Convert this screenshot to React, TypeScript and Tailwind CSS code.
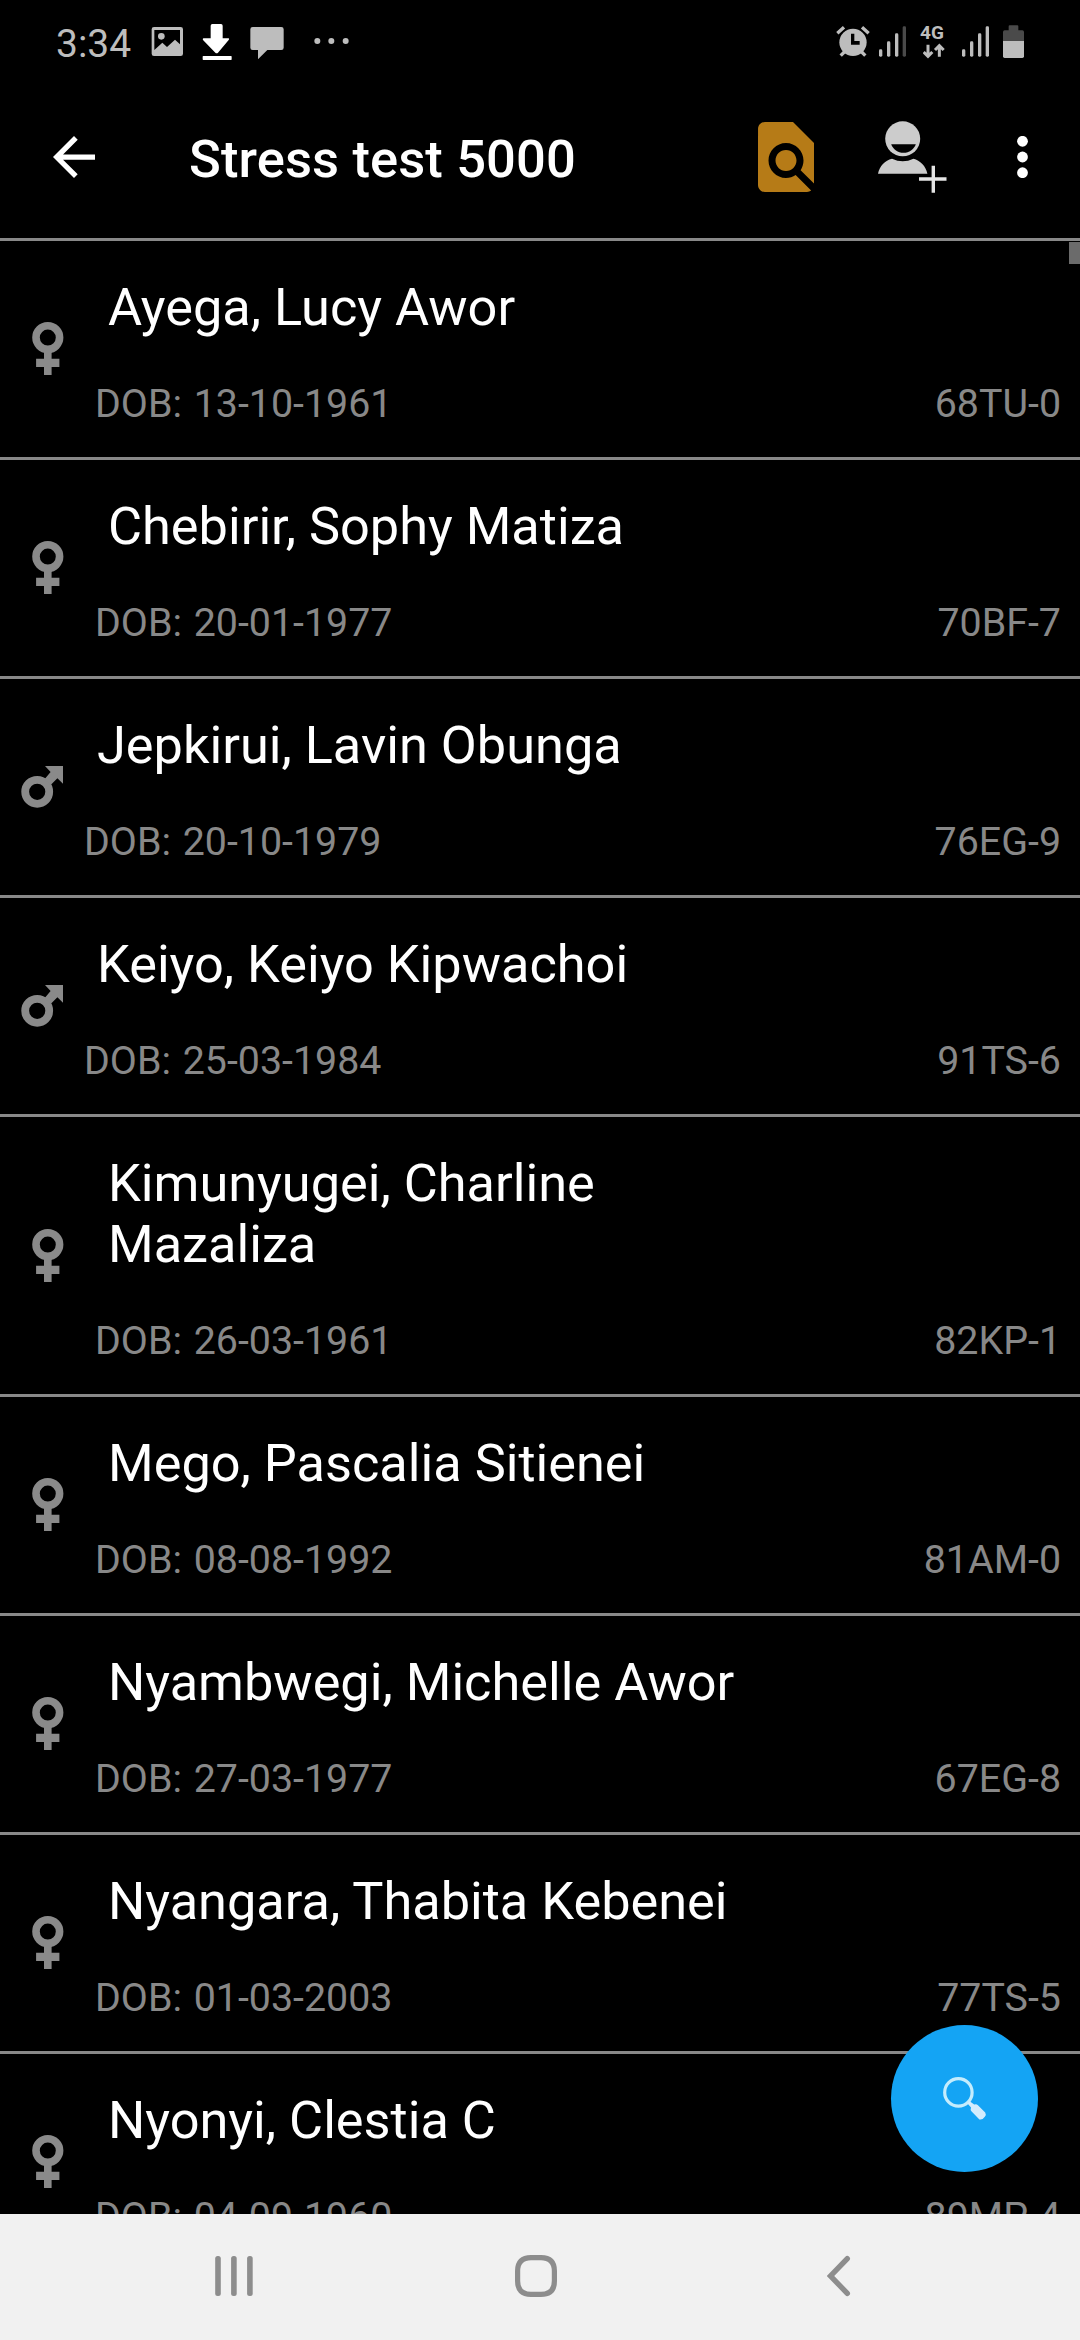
import type { ReactNode } from "react";

type Sex = "female" | "male";

interface Patient {
  name: string;
  dob: string;
  code: string;
  sex: Sex;
}

const patients: Patient[] = [
  { name: "Ayega, Lucy Awor", dob: "13-10-1961", code: "68TU-0", sex: "female" },
  { name: "Chebirir, Sophy Matiza", dob: "20-01-1977", code: "70BF-7", sex: "female" },
  { name: "Jepkirui, Lavin Obunga", dob: "20-10-1979", code: "76EG-9", sex: "male" },
  { name: "Keiyo, Keiyo Kipwachoi", dob: "25-03-1984", code: "91TS-6", sex: "male" },
  { name: "Kimunyugei, Charline Mazaliza", dob: "26-03-1961", code: "82KP-1", sex: "female" },
  { name: "Mego, Pascalia Sitienei", dob: "08-08-1992", code: "81AM-0", sex: "female" },
  { name: "Nyambwegi, Michelle Awor", dob: "27-03-1977", code: "67EG-8", sex: "female" },
  { name: "Nyangara, Thabita Kebenei", dob: "01-03-2003", code: "77TS-5", sex: "female" },
  { name: "Nyonyi, Clestia C", dob: "04-09-1960", code: "89MP-4", sex: "female" },
];

function FemaleIcon() {
  return (
    <svg className="mb-px h-[53px] w-8" viewBox="0 0 32 53" fill="#8a8a8a">
      <circle cx="15.8" cy="15.6" r="11.8" fill="none" stroke="#8a8a8a" strokeWidth="7.6" />
      <path d="M12 30h7.6v6.7h7.8V45h-7.8v8H12v-8H4.1v-8.3H12z" />
    </svg>
  );
}

function MaleIcon() {
  return (
    <svg className="h-[42px] w-[42px]" viewBox="0 0 42 42" fill="#8a8a8a">
      <circle cx="16.2" cy="25.8" r="12" fill="none" stroke="#8a8a8a" strokeWidth="7.8" />
      <path d="M24 0h18v17.8l-5.6-5.6-7 7-5.7-6.2 5.9-7z" />
    </svg>
  );
}

function Signal({ weak }: { weak?: boolean }) {
  return (
    <svg className="h-9 w-7" viewBox="0 0 84 108" fill="#bdbdbd">
      <rect x="0" y="76" width="10" height="22" rx="4" />
      <rect x="24" y="52" width="10" height="46" rx="4" />
      <rect x="48" y="28" width="10" height="70" rx="4" />
      <rect x="71" y="7" width="10" height="91" rx="4" fill={weak ? "#4a4a4a" : "#bdbdbd"} />
    </svg>
  );
}

function StatusBar() {
  return (
    <div className="flex h-[75px] items-start pt-6 text-[#bdbdbd]">
      <span className="ml-[56px] w-[95px] text-[39px] leading-[40px]">3:34</span>
      <svg className="h-9 w-8" viewBox="0 0 96 108" fill="#bdbdbd">
        <path
          fillRule="evenodd"
          d="M9 9h80a7 7 0 0 1 7 7v73a7 7 0 0 1-7 7H9a7 7 0 0 1-7-7V16a7 7 0 0 1 7-7zm1 9v60l24-22 14 13 24-22 15 14V18z"
        />
        <circle cx="31" cy="37" r="10" />
      </svg>
      <svg className="ml-[19px] h-9 w-[30px]" viewBox="0 0 90 108" fill="#fff">
        <path d="M31 0h26q5 0 5 5v38h18q3 2 0 5L48 86q-4 4-8 0L3 48q-2-3 1-5h22V5q0-5 5-5z" />
        <rect x="2" y="96" width="87" height="12" rx="2" />
      </svg>
      <svg className="ml-[18px] h-9 w-[34px]" viewBox="0 0 102 108" fill="#bdbdbd">
        <path d="M8 9h86q7 0 7 7v55q0 7-7 7H52L24 106V78H8q-7 0-7-7V16q0-7 7-7z" />
      </svg>
      <svg className="ml-[30px] h-9 w-9" viewBox="0 0 108 108" fill="#bdbdbd">
        <circle cx="10" cy="51" r="9" />
        <circle cx="52" cy="51" r="9" />
        <circle cx="95" cy="51" r="9" />
      </svg>

      <div className="ml-auto mr-14 flex items-start">
        <svg className="h-9 w-[34px]" viewBox="0 0 102 108" fill="#bdbdbd">
          <circle cx="51" cy="55" r="41" />
          <path
            d="M4 28 24 10M98 28 78 10M14 95l14-14M88 95 74 81"
            stroke="#bdbdbd"
            strokeWidth="10"
          />
          <path d="M45 29h10v22h16v11H45z" fill="#000" />
        </svg>
        <div className="ml-[9px]">
          <Signal weak />
        </div>
        <div className="ml-[13px] flex h-9 w-[26px] flex-col items-start">
          <span className="h-[17px] text-[19px] font-bold leading-[17px]">4G</span>
          <svg className="ml-[3px] mt-[2px] h-4 w-[22px]" viewBox="0 0 66 48" fill="none" stroke="#bdbdbd" strokeWidth="9">
            <path d="M15 5v36M2 27l13 13 13-13M49 41V7M36 21 49 8l13 13" />
          </svg>
        </div>
        <div className="ml-4">
          <Signal />
        </div>
        <svg className="ml-[13px] h-9 w-[21px]" viewBox="0 0 63 108">
          <path d="M17 19V7q0-3 3-3h23q3 0 3 3v12h12q5 0 5 5v27H0V24q0-5 5-5z" fill="#4a4a4a" />
          <path d="M0 51h63v46q0 5-5 5H5q-5 0-5-5z" fill="#bdbdbd" />
        </svg>
      </div>
    </div>
  );
}

function Header() {
  return (
    <header className="flex h-[166px] items-center border-b-[3px] border-[#888888]">
      <svg className="ml-[53px] h-[42px] w-[42px]" viewBox="4 4 16 16" fill="#fff">
        <path d="M20 11H7.83l5.59-5.59L12 4l-8 8 8 8 1.41-1.41L7.83 13H20v-2z" />
      </svg>
      <h1 className="ml-[94px] mt-[5px] text-[52.5px] font-medium leading-[62px] tracking-[0.12px] text-white">
        Stress test 5000
      </h1>
      <svg className="ml-auto h-[70px] w-14" viewBox="4 2 16 20" fill="#b67b17">
        <path d="M20 19.59V8l-6-6H6c-1.1 0-1.99.9-1.99 2L4 20c0 1.1.89 2 1.99 2H18c.45 0 .85-.15 1.19-.4l-4.43-4.43c-.8.52-1.74.83-2.76.83-2.76 0-5-2.24-5-5s2.24-5 5-5 5 2.24 5 5c0 1.02-.31 1.96-.83 2.75L20 19.59zM9 13c0 1.66 1.34 3 3 3s3-1.34 3-3-1.34-3-3-3-3 1.34-3 3z" />
      </svg>
      <svg className="ml-16 h-[72px] w-[69px]" viewBox="0 0 69 72" fill="#cccccc">
        <circle cx="24.7" cy="17.8" r="17.5" />
        <path d="M13.2 23.2h24.6c-2 5.3-6.6 8.6-12.3 8.6s-10.3-3.3-12.3-8.6z" fill="#000" />
        <path d="M0 52.8C1.5 45 7 39.5 14 37.7q10.7 5 21.5 0C42 39.5 48 45 49.4 52.8z" />
        <path d="M55.3 44.7v27M41 58h27.5" stroke="#e4e4e4" strokeWidth="3.4" />
      </svg>
      <svg className="ml-[70px] mr-[52px] h-[42px] w-[11px]" viewBox="0 0 11 42" fill="#fff">
        <circle cx="5.5" cy="5.3" r="5.4" />
        <circle cx="5.5" cy="21" r="5.4" />
        <circle cx="5.5" cy="36.7" r="5.4" />
      </svg>
    </header>
  );
}

function PatientRow({ name, dob, code, sex }: Patient) {
  return (
    <li className="flex shrink-0 border-b-[3px] border-[#888888]">
      <div
        className={`flex shrink-0 items-center justify-center ${
          sex === "female" ? "w-[95px]" : "w-[84px]"
        }`}
      >
        {sex === "female" ? <FemaleIcon /> : <MaleIcon />}
      </div>
      <div className="flex-1 pb-[30px] pr-[19px] pt-[36px]">
        <p className="max-w-[660px] pl-[13px] text-[52.3px] leading-[61px] text-white">{name}</p>
        <div className="mt-[43px] flex justify-between text-[39.375px] leading-[46px] text-[#888888]">
          <span className="[word-spacing:2px]">DOB: {dob}</span>
          <span>{code}</span>
        </div>
      </div>
    </li>
  );
}

function NavButton({ className, children }: { className: string; children: ReactNode }) {
  return <button className={`flex h-[42px] items-center ${className}`}>{children}</button>;
}

function NavBar() {
  return (
    <nav className="flex h-[126px] shrink-0 items-start bg-[#f1f1f1] pt-[41px]">
      <NavButton className="ml-[215px]">
        <svg className="h-[42px] w-[38px]" viewBox="0 0 38 42" fill="#8d8d8d">
          <rect x="0.2" y="1" width="5.6" height="40" rx="2.5" />
          <rect x="16.1" y="1" width="5.6" height="40" rx="2.5" />
          <rect x="32.1" y="1" width="5.6" height="40" rx="2.5" />
        </svg>
      </NavButton>
      <NavButton className="ml-[262px]">
        <svg className="h-[42px] w-[42px]" viewBox="0 0 42 42" fill="none" stroke="#8d8d8d" strokeWidth="5.2">
          <path d="M16 2.6h10q13.4 0 13.4 13.4v10q0 13.4-13.4 13.4H16Q2.6 39.4 2.6 26V16Q2.6 2.6 16 2.6z" />
        </svg>
      </NavButton>
      <NavButton className="ml-[270px]">
        <svg
          className="h-[42px] w-6"
          viewBox="0 0 24 42"
          fill="none"
          stroke="#8d8d8d"
          strokeWidth="5.4"
          strokeLinecap="round"
        >
          <path d="M20.3 3.6 3.6 21l16.7 17.4" />
        </svg>
      </NavButton>
    </nav>
  );
}

export default function App() {
  return (
    <div className="flex h-[2340px] w-[1080px] flex-col overflow-hidden bg-black font-['Roboto',sans-serif]">
      <div className="shrink-0">
        <StatusBar />
        <Header />
      </div>

      <main className="relative min-h-0 flex-1 overflow-hidden">
        <ul className="flex flex-col">
          {patients.map((patient) => (
            <PatientRow key={patient.code} {...patient} />
          ))}
        </ul>

        {/* Scroll thumb */}
        <div className="absolute right-0 top-px h-[22px] w-[11px] bg-[#6b6b6b]" />

        {/* Search button */}
        <button className="absolute bottom-[42px] right-[42px] h-[147px] w-[147px] rounded-full bg-[#14a4f4]">
          <svg className="h-full w-full" viewBox="0 0 147 147" fill="#d3ecfd">
            <circle cx="67.4" cy="67.4" r="13.7" fill="none" stroke="#c4ecfd" strokeWidth="3.2" />
            <path d="m76.5 78.5 2.2-2.2 4.5 3.3q2.2-.8 4 .8l7 7.2q1.4 2.2-.4 4.2-2.2 3.4-5.4 2.6l-8-8.2q-1.2-1.6-.4-3.8z" />
          </svg>
        </button>
      </main>

      <NavBar />
    </div>
  );
}
